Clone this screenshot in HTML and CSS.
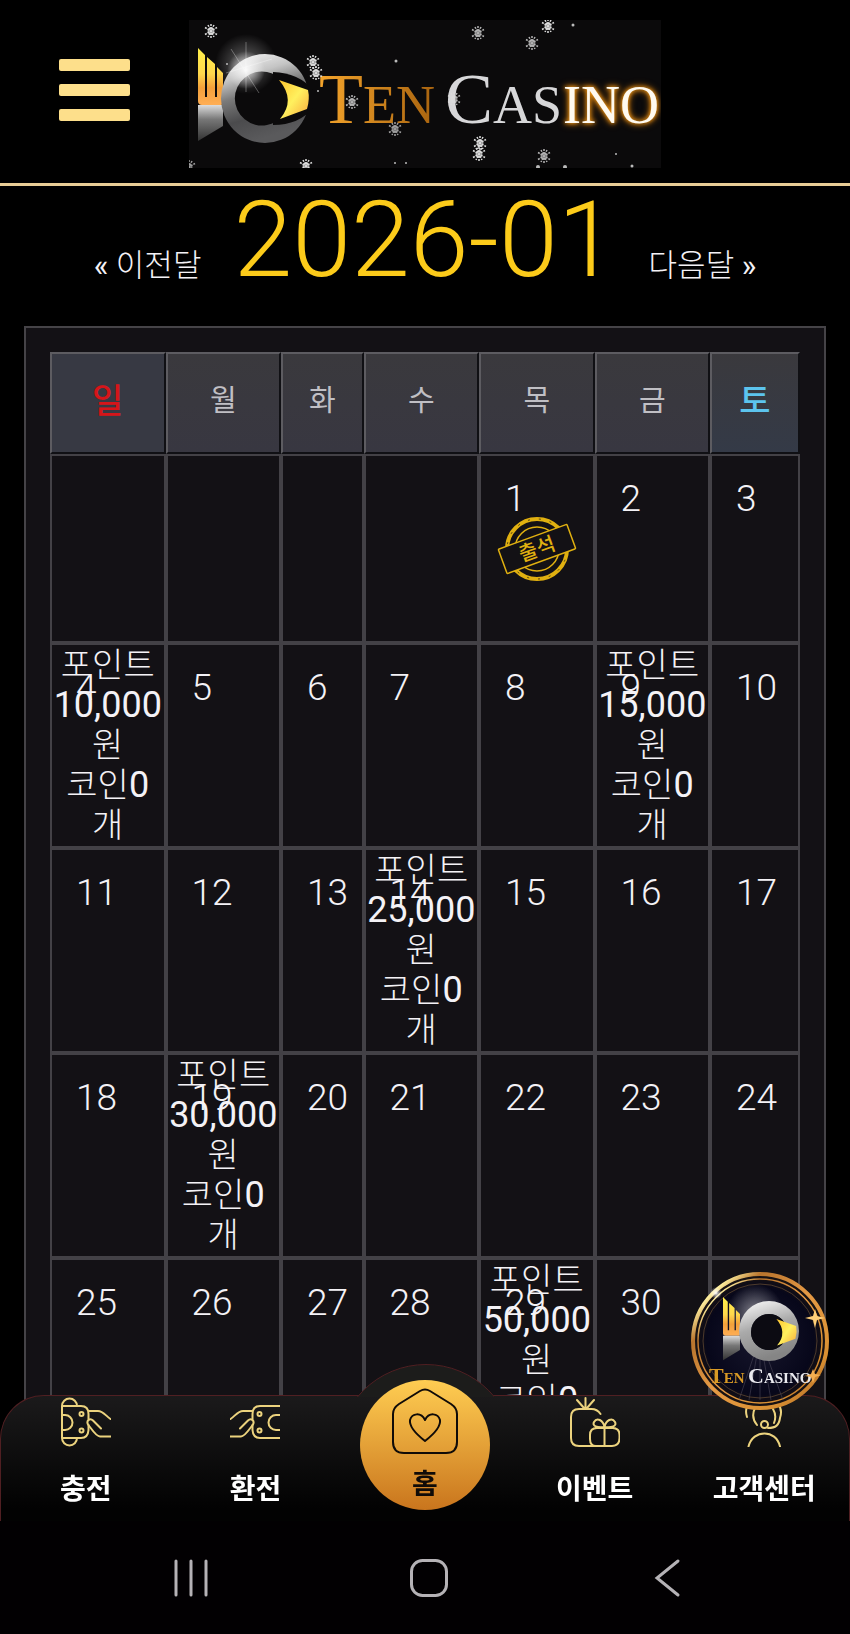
FILE: index.html
```html
<!DOCTYPE html>
<html lang="ko">
<head>
<meta charset="utf-8">
<meta name="viewport" content="width=device-width, initial-scale=1">
<title>Ten Casino</title>
<link rel="stylesheet" href="styles.css">
</head>
<body>
<svg class="defs" aria-hidden="true">
  <defs>
    <linearGradient id="gold" x1="0" y1="0" x2="0" y2="1"><stop offset="0" stop-color="#fff04a"/><stop offset=".45" stop-color="#ffd84c"/><stop offset=".7" stop-color="#f3a03a"/><stop offset="1" stop-color="#ffae55"/></linearGradient>
    <linearGradient id="eye" x1="0" y1="0" x2="1" y2="1"><stop offset="0" stop-color="#ffc52e"/><stop offset=".5" stop-color="#fff05e"/><stop offset="1" stop-color="#f9a83c"/></linearGradient>
    <linearGradient id="silver" x1="0" y1="0" x2=".3" y2="1"><stop offset="0" stop-color="#fff"/><stop offset=".3" stop-color="#c4c4c4"/><stop offset=".5" stop-color="#7a7a7a"/><stop offset=".75" stop-color="#4b4b4d"/><stop offset="1" stop-color="#5a5a5c"/></linearGradient>
    <linearGradient id="brightsilver" x1="0" y1="0" x2=".3" y2="1"><stop offset="0" stop-color="#fff"/><stop offset=".5" stop-color="#aaa"/><stop offset="1" stop-color="#858585"/></linearGradient>
    <linearGradient id="tail" x1="0" y1="0" x2="0" y2="1"><stop offset="0" stop-color="#ddd"/><stop offset=".4" stop-color="#777"/><stop offset="1" stop-color="#333"/></linearGradient>
    <linearGradient id="ten" x1="0" y1="0" x2="1" y2="0"><stop offset="0" stop-color="#f5a52c"/><stop offset="1" stop-color="#a9640f"/></linearGradient>
    <radialGradient id="flare"><stop offset="0" stop-color="#fff"/><stop offset=".3" stop-color="#fff" stop-opacity=".65"/><stop offset="1" stop-color="#fff" stop-opacity="0"/></radialGradient>
    <radialGradient id="navy"><stop offset="0" stop-color="#17162c"/><stop offset=".8" stop-color="#07071a"/><stop offset="1" stop-color="#1c1510"/></radialGradient>
    <linearGradient id="rim" x1="0" y1="0" x2="1" y2="1"><stop offset="0" stop-color="#c9782c"/><stop offset=".14" stop-color="#fff1a0"/><stop offset=".25" stop-color="#b8742d"/><stop offset=".5" stop-color="#e59a45"/><stop offset=".8" stop-color="#d99032"/><stop offset="1" stop-color="#a05c22"/></linearGradient>
    <g id="flake">
      <path d="M0-7V7M-6-3.500 6 3.500M-6 3.500 6-3.500M-3-6 3 6M3-6-3 6" stroke="#ddd" stroke-width="1.500" stroke-dasharray="2 1"/>
      <circle r="3.500" fill="#ddd" opacity=".7"/>
    </g>
    <g id="mark">
      <path d="M0 0 7 7V49h2V9l8 7V49h2V19l6 6V55q0 2-2 2H4q-4 0-4-4Z" fill="url(#gold)"/>
      <path d="M0 57H25V78L0 93Z" fill="url(#tail)"/>
    </g>
    <path id="pupil" d="M80 31 109 41Q111 50 108 60L81 70Q97 51 80 31Z"/>
    <g id="hand">
      <path d="M28 14h9c5 0 8 5 12.500 8M49.500 39.500H39c-4 0-8-7-12-12-2-4 2-7 5-4l8 8"/>
      <circle class="dot" cx="20.500" cy="17" r="2"/><circle class="dot" cx="20.500" cy="33.500" r="2"/>
    </g>
  </defs>
</svg>
<div class="app">
  <header class="header">
    <button class="menu" type="button" aria-label="메뉴"><span></span><span></span><span></span></button>
    <a class="logo" href="#">
      <svg viewBox="0 0 472 148" role="img" aria-label="Ten Casino">
        <rect width="472" height="148" fill="#0b0a0b"/>
        <ellipse cx="57" cy="44" rx="31" ry="30" fill="url(#flare)" opacity=".4"/>
        <use href="#mark" transform="translate(9 28)"/>
        <path fill="url(#silver)" fill-rule="evenodd" d="M76 34a44 44.500 0 1 1 0 89 44 44.500 0 0 1 0-89Zm2 18a27 27 0 1 0 0 53 27 27 0 0 0 0-53Z"/>
        <path d="M84 52Q110 53 124 70V88Q110 105 84 105Z" fill="#0b0a0b"/>
        <use href="#pupil" transform="translate(10 29)" fill="url(#eye)"/>
        <circle cx="57" cy="50" r="19" fill="url(#flare)" opacity=".9"/>
        <path d="M42 29 70 73M37 53 83 39M57 22V72" stroke="#fff" stroke-width="1" opacity=".3"/>
        <text class="brand" x="130" y="103" fill="url(#ten)">T<tspan class="small">EN</tspan></text>
        <text class="brand" x="256" y="103" fill="#d7d7d9">C<tspan class="small">AS</tspan></text>
        <text class="brand small glow" x="470" y="103">INO</text>
        <use href="#flake" x="22" y="11"/><use href="#flake" x="124" y="42"/><use href="#flake" x="127" y="53"/>
        <use href="#flake" x="289" y="13" opacity=".8"/><use href="#flake" x="359" y="6"/><use href="#flake" x="343" y="23" opacity=".8"/>
        <use href="#flake" x="163" y="82" opacity=".8"/><use href="#flake" x="206" y="109" opacity=".7"/><use href="#flake" x="265" y="79" opacity=".8"/>
        <use href="#flake" x="291" y="123"/><use href="#flake" x="290" y="134"/><use href="#flake" x="355" y="136" opacity=".8"/>
        <use href="#flake" x="117" y="146"/><use href="#flake" x="0" y="147" opacity=".7"/>
        <g fill="#bbb"><circle cx="38" cy="44" r="1"/><circle cx="207" cy="41" r="1.500"/><circle cx="384" cy="5" r="1.500"/><circle cx="427" cy="134" r="1"/><circle cx="443" cy="146" r="1.500"/><circle cx="206" cy="143" r="1"/><circle cx="217" cy="143" r="1"/><circle cx="376" cy="147" r="2"/><circle cx="349" cy="147" r="2"/><circle cx="129" cy="71" r="1"/></g>
      </svg>
    </a>
  </header>
  <main class="main">
    <div class="month">
      <a class="move" href="#"><b>«</b> 이전달</a>
      <h1 class="title">2026-01</h1>
      <a class="move" href="#">다음달 <b>»</b></a>
    </div>
    <div class="panel">
      <table class="calendar">
        <colgroup><col><col><col class="narrow"><col><col><col><col class="last"></colgroup>
        <thead>
          <tr><th class="sun">일</th><th>월</th><th>화</th><th>수</th><th>목</th><th>금</th><th class="sat">토</th></tr>
        </thead>
        <tbody>
          <tr class="first"><td></td><td></td><td></td><td></td>
            <td><span class="day">1</span>
              <svg class="stamp" viewBox="0 0 80 66" role="img" aria-label="출석">
                <g fill="none" stroke="#e0b010"><circle cx="40" cy="33" r="30" stroke-width="4"/><circle cx="40" cy="33" r="22" stroke-width="1.500"/></g>
                <circle cx="40" cy="33" r="30" fill="none" stroke="#131115" stroke-width="1" stroke-dasharray="2 9" opacity=".7"/>
                <g transform="rotate(-20 40 33)"><rect x="3.500" y="20" width="73" height="26" rx="1" fill="#131115" stroke="#e0b010" stroke-width="1.500"/><text class="stamp-text" x="40" y="40">출석</text></g>
              </svg></td>
            <td><span class="day">2</span></td><td><span class="day">3</span></td></tr>
          <tr>
            <td><span class="day">4</span><div class="reward">포인트<br><b>10,000</b><br>원<br>코인<b>0</b><br>개</div></td>
            <td><span class="day">5</span></td><td><span class="day">6</span></td><td><span class="day">7</span></td><td><span class="day">8</span></td>
            <td><span class="day">9</span><div class="reward">포인트<br><b>15,000</b><br>원<br>코인<b>0</b><br>개</div></td>
            <td><span class="day">10</span></td></tr>
          <tr><td><span class="day">11</span></td><td><span class="day">12</span></td><td><span class="day">13</span></td>
            <td><span class="day">14</span><div class="reward">포인트<br><b>25,000</b><br>원<br>코인<b>0</b><br>개</div></td>
            <td><span class="day">15</span></td><td><span class="day">16</span></td><td><span class="day">17</span></td></tr>
          <tr><td><span class="day">18</span></td>
            <td><span class="day">19</span><div class="reward">포인트<br><b>30,000</b><br>원<br>코인<b>0</b><br>개</div></td>
            <td><span class="day">20</span></td><td><span class="day">21</span></td><td><span class="day">22</span></td><td><span class="day">23</span></td><td><span class="day">24</span></td></tr>
          <tr><td><span class="day">25</span></td><td><span class="day">26</span></td><td><span class="day">27</span></td><td><span class="day">28</span></td>
            <td><span class="day">29</span><div class="reward">포인트<br><b>50,000</b><br>원<br>코인<b>0</b><br>개</div></td>
            <td><span class="day">30</span></td><td></td></tr>
        </tbody>
      </table>
    </div>
  </main>
  <div class="dock">
    <nav class="tabs">
      <div class="bump"></div>
      <a class="tab" href="#">
        <svg class="icon" viewBox="0 0 50 50"><path d="M1 9a7.500 7.500 0 0 1 15 0M1 41a7.500 7.500 0 0 0 15 0M1 9V41M1 9H20q7.500 0 7.500 8v5M1 41H20q7 0 7.500-8v-5M1 18H4a7.500 7.500 0 0 1 0 15H1"/><use href="#hand"/></svg>
        <span>충전</span></a>
      <a class="tab" href="#">
        <svg class="icon" viewBox="0 0 50 50"><g transform="matrix(-1 0 0 1 50 0)"><path d="M0 9H20q7.500 0 7.500 8v5M0 41H20q7 0 7.500-8v-5M0 18H4a7.500 7.500 0 0 1 0 15H0"/><use href="#hand"/></g></svg>
        <span>환전</span></a>
      <a class="tab home" href="#">
        <svg class="icon-home" viewBox="0 0 66 66"><path d="M28 3q5-3 10 0L59 16q6 4 6 10V54q0 11-11 11H12Q1 65 1 54V26q0-6 6-10Z"/><path d="M33 53C24 46 17 39 18 32c2-7 11-8 15 0 4-8 13-7 15 0 1 7-6 14-15 21Z"/></svg>
        <span>홈</span></a>
      <a class="tab" href="#">
        <svg class="icon" viewBox="0 0 50 50"><path d="M30.500 17c-2-3-5-5-9-5H9q-8 0-8 8V41q0 8 8 8H42q7.500 0 7.500-8V38q0-7-7-7H27q-7 0-7 7v4q0 7 6 7M34.500 31V49M34.500 30C27 31 22 29 24 25c3-5 9-2 10.500 5ZM34.500 30C42 31 47 29 45 25c-3-5-9-2-10.500 5ZM15.500 1V11M7 3 14 11M24 3 17 11"/></svg>
        <span>이벤트</span></a>
      <a class="tab" href="#">
        <svg class="icon" viewBox="0 0 50 50"><path d="M9.500 49.500C14 32 37 32 41 49.500M18 28c-4-5-5-11-2-17M34 12c3 5 3 9 1 14M8 20C4 8 14 1 25 1s20 8 16 20c-1 7-4 10-12 10"/><circle cx="25.500" cy="27.500" r="3.500"/></svg>
        <span>고객센터</span></a>
    </nav>
    <div class="system">
      <button type="button" aria-label="최근 앱"><svg viewBox="0 0 40 40"><path d="M5 3V37M20 3V37M35 3V37"/></svg></button>
      <button type="button" aria-label="홈 화면"><svg viewBox="0 0 40 40"><rect x="2.500" y="2.500" width="35" height="35" rx="11"/></svg></button>
      <button type="button" aria-label="뒤로"><svg viewBox="0 0 40 40"><path d="M31 3 10 20 31 37"/></svg></button>
    </div>
    <a class="float" href="#">
      <svg viewBox="0 0 138 138" role="img" aria-label="Ten Casino">
        <circle cx="69" cy="69" r="67" fill="url(#navy)" stroke="url(#rim)" stroke-width="4"/>
        <circle cx="69" cy="69" r="62" fill="none" stroke="url(#rim)" stroke-width="1.500"/>
        <circle cx="69" cy="69" r="57" fill="none" stroke="#4d3a2b" stroke-width="1"/>
        <path d="M69 65 48 128M69 65 58 128M69 65 69 128M69 65 80 128M69 65 92 128" stroke="#545060" stroke-width="1" opacity=".5"/>
        <circle cx="64" cy="40" r="28" fill="url(#flare)" opacity=".5"/>
        <use href="#mark" transform="translate(32 25) scale(.68)"/>
        <path fill="url(#brightsilver)" fill-rule="evenodd" d="M78 29a30 30 0 1 1 0 60 30 30 0 0 1 0-60Zm0 13a18 18 0 1 0 0 36 18 18 0 0 0 0-36Z"/>
        <circle cx="78" cy="60" r="18" fill="#0c0b12"/>
        <use href="#pupil" transform="translate(31 26) scale(.68)" fill="url(#eye)"/>
        <text class="badge" x="18" y="111" fill="#d99a25">T<tspan class="badge-small">EN</tspan></text>
        <text class="badge" x="57" y="111" fill="#e9e9ee">C<tspan class="badge-small">ASINO</tspan></text>
        <path d="M124 37l2 7 8 2-8 2-2 8-2-8-8-2 8-2Z" fill="#ffcf78"/>
        <path d="M122 97l2 5 6 1-6 2-2 6-2-6-6-1 6-2Z" fill="#f4ae50"/>
        <circle cx="25" cy="21" r="6" fill="url(#flare)"/>
      </svg>
    </a>
  </div>
</div>
</body>
</html>
```

FILE: styles.css
```css
* { box-sizing: border-box; }
body {
  margin: 0;
  background: #000;
  color: #f4f2f6;
  font-family: Roboto, "Noto Sans CJK KR", sans-serif;
  font-weight: 300;
}
a { color: inherit; text-decoration: none; }
button { padding: 0; border: 0; background: none; }
.defs { position: absolute; width: 0; height: 0; }
.app { height: 100vh; display: flex; flex-direction: column; overflow: hidden; }

.header {
  flex: none;
  display: grid;
  grid-template-columns: 1fr 472px 1fr;
  padding: 20px 0 15px;
  border-bottom: 3px solid #e8cd96;
}
.menu {
  justify-self: start;
  align-self: center;
  width: 71px;
  margin: 0 0 8px 59px;
  display: grid;
  gap: 13px;
}
.menu span { height: 12px; border-radius: 2px; background: #fddf8b; }
.logo svg { display: block; width: 100%; }
.brand { font: 72px "Liberation Serif", serif; }
.small, .brand.small { font-size: 54px; }
.glow { fill: #fffaf0; text-anchor: end; filter: drop-shadow(0 0 2px #ffa31a) drop-shadow(0 0 3px #c87208); }

.main { flex: 1; min-height: 0; overflow: hidden; }
.month {
  height: 140px;
  display: flex;
  justify-content: center;
  align-items: baseline;
  gap: 32px;
}
.title { margin: 0; font-size: 106px; line-height: 108px; font-weight: 300; color: #fccb1a; }
.move { font-size: 31px; line-height: 40px; white-space: nowrap; }
.move b { font-weight: 400; }

.panel { margin: 0 24px; padding: 24px; border: 2px solid #454347; background: #131115; }
.calendar { width: 100%; table-layout: fixed; border-collapse: separate; border-spacing: 0; }
.narrow { width: 11%; }
.last { width: 12%; }
.calendar th {
  height: 102px;
  padding: 0 0 10px;
  border: 2px solid;
  border-color: #5d5c61 #101014 #101014 #5d5c61;
  background: linear-gradient(#3a393d, #383741);
  color: #c0bfc4;
  font-size: 29px;
  font-weight: 400;
}
.calendar .sun { background: #373943; color: #d61519; font-size: 34px; font-weight: 500; }
.calendar .sat { background: linear-gradient(#3a393d, #343a47); color: #5cc4ee; font-size: 34px; font-weight: 500; }
.calendar td {
  position: relative;
  height: 205px;
  padding: 0;
  border: 2px solid #434146;
  vertical-align: top;
}
.calendar .first td { height: 189px; }
.day { position: absolute; left: 24px; top: 23px; font-size: 37px; line-height: 40px; }
.reward { font-size: 34px; line-height: 40px; text-align: center; white-space: nowrap; }
.reward b { font-size: 36px; font-weight: 400; }
.stamp { display: block; width: 80px; margin: 60px auto 0; }
.stamp-text { font: 500 20px "Noto Sans CJK KR", sans-serif; fill: #e0b010; text-anchor: middle; }

.dock { position: fixed; inset: auto 0 0; }
.tabs {
  position: relative;
  height: 126px;
  display: grid;
  grid-template-columns: repeat(5, 1fr);
  border: 1px solid #501f22;
  border-bottom: 0;
  border-radius: 44px 44px 0 0;
  background: linear-gradient(#1b1a1b, #020202 90%);
}
.bump {
  position: absolute;
  left: 50%;
  bottom: 100%;
  width: 138px;
  height: 33px;
  margin: 0 0 -1px -69px;
  overflow: hidden;
}
.bump::before {
  content: "";
  display: block;
  width: 176px;
  height: 176px;
  margin-left: -19px;
  border: 1px solid #501f22;
  border-radius: 50%;
  background: #1c1c1b;
}
.tab {
  display: flex;
  flex-direction: column;
  align-items: center;
  gap: 22px;
  padding-top: 1px;
  font: 700 28px/36px "Noto Sans CJK KR", sans-serif;
  color: #fff;
  white-space: nowrap;
}
.icon { flex: none; width: 50px; height: 50px; fill: none; stroke: #ecd37e; stroke-width: 2; stroke-linecap: round; stroke-linejoin: round; }
.icon .dot { fill: #ecd37e; stroke: none; }
.home {
  position: relative;
  justify-self: center;
  width: 130px;
  height: 130px;
  margin-top: -16px;
  padding-top: 8px;
  gap: 10px;
  border-radius: 50%;
  background: linear-gradient(#ffcd52, #c9751d);
  color: #100b08;
}
.icon-home { flex: none; width: 66px; height: 66px; fill: none; stroke: #100b08; stroke-width: 2; stroke-linejoin: round; }
.system {
  height: 113px;
  padding: 4px 64px 0 72px;
  display: grid;
  grid-template-columns: repeat(3, 1fr);
  background: #020002;
}
.system svg { width: 40px; height: 40px; fill: none; stroke: #b5b2b6; stroke-width: 3; stroke-linecap: round; }
.float { position: absolute; right: 21px; top: -123px; width: 138px; height: 138px; }
.float svg { display: block; }
.badge { font: 700 22px "Liberation Serif", serif; }
.badge-small { font-size: 15px; }
```
